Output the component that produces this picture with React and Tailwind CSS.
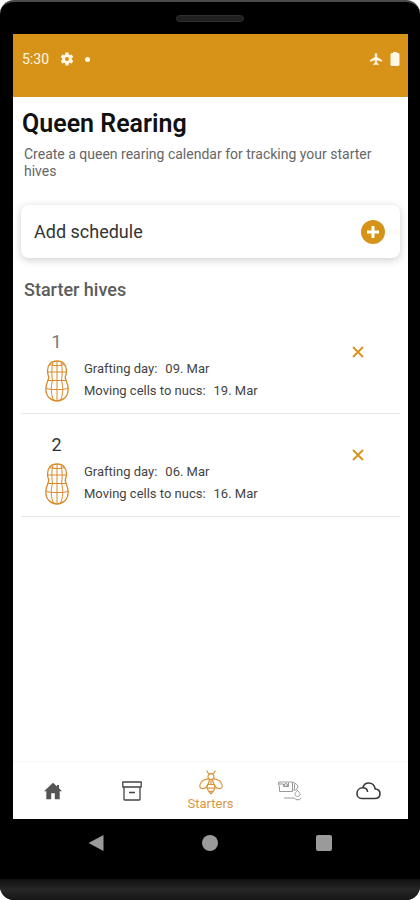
const hives = [
  { id: 1, grafting: "09. Mar", moving: "19. Mar", tone: "text-[#777777]" },
  { id: 2, grafting: "06. Mar", moving: "16. Mar", tone: "text-[#333333]" },
];

function GearIcon() {
  return (
    <svg viewBox="0 0 24 24" className="size-4" fill="currentColor" aria-hidden="true">
      <path d="M19.14 12.94a7.1 7.1 0 0 0 0-1.88l2.03-1.58a.5.5 0 0 0 .12-.61l-1.92-3.32a.49.49 0 0 0-.59-.22l-2.39.96a7 7 0 0 0-1.62-.94l-.36-2.54a.48.48 0 0 0-.48-.41h-3.84a.47.47 0 0 0-.47.41l-.36 2.54a7.4 7.4 0 0 0-1.62.94l-2.39-.96a.48.48 0 0 0-.59.22L2.74 8.87a.47.47 0 0 0 .12.61l2.03 1.58a7.4 7.4 0 0 0 0 1.88l-2.03 1.58a.5.5 0 0 0-.12.61l1.92 3.32c.12.22.37.29.59.22l2.39-.96c.5.38 1.03.7 1.62.94l.36 2.54c.05.24.24.41.48.41h3.84c.24 0 .44-.17.47-.41l.36-2.54a7 7 0 0 0 1.62-.94l2.39.96c.22.08.47 0 .59-.22l1.92-3.32a.47.47 0 0 0-.12-.61zM12 15a3 3 0 1 1 0-6 3 3 0 0 1 0 6z" />
    </svg>
  );
}

function PlaneIcon() {
  return (
    <svg viewBox="0 0 24 24" className="size-[14px]" fill="currentColor" stroke="currentColor" aria-hidden="true">
      <path d="M22 16v-2l-8.5-5V3.5a1.5 1.5 0 0 0-3 0V9L2 14v2l8.5-2.5V19L8 20.5V22l4-1 4 1v-1.5L13.5 19v-5.5z" />
    </svg>
  );
}

function BatteryIcon() {
  return (
    <svg viewBox="0 0 10 14" className="h-[14px] w-[10px]" fill="currentColor" aria-hidden="true">
      <path d="M3 0h4v1h1.5l1 1v11l-1 1h-7l-1-1V2l1-1H3z" />
    </svg>
  );
}

function CellIcon() {
  return (
    <svg viewBox="0 0 24 42" className="h-[42px] w-6" fill="none" stroke="#d98a2b" aria-hidden="true">
      <path strokeWidth="1.3" d="M12 1C6 1 2.5 5 2.5 10.500c0 2.500.5 4.500 1.300 6.500.3 2-3 6-3 12C.8 36.500 6 41 12 41s11.200-4.500 11.200-12c0-6-3.300-10-3-12 .8-2 1.300-4 1.300-6.500C21.500 5 18 1 12 1z" />
      <path strokeWidth="1" d="M12 1v40M8 2.500C6.500 7 6.500 15 7.500 20.500 5.500 27 6 35 8.500 40M16 2.500c1.500 4.500 1.500 12.500.5 18 2 6.500 1.500 14.500-1 19.500M4.500 4.500c4 1.500 11 1.500 15 0M2.500 12h19M3 20.500h18M1 28.500c6 1.500 16 1.500 22 0" />
    </svg>
  );
}

function HomeIcon() {
  return (
    <svg viewBox="0 0 18 18" className="size-[18px]" fill="#555555" aria-hidden="true">
      <path d="M9 .8 13 4.500V3h2v3.300L18 9.200h-2.300V17.200h-4.900v-6H7.200v6H2.300V9.200H0z" />
    </svg>
  );
}

function BoxIcon() {
  return (
    <svg viewBox="0 0 20 20" className="size-5" fill="none" stroke="#444444" strokeWidth="1.3" strokeLinejoin="round" aria-hidden="true">
      <path d="M.8 1h18.400v5H.8zM2 6v12.200c0 .5.300.8.800.8h14.400c.5 0 .8-.3.800-.8V6" />
      <path d="M7 11.500h6" strokeWidth="1.6" />
    </svg>
  );
}

function BeeIcon() {
  return (
    <svg viewBox="0 0 24 25" className="h-[25px] w-6" fill="none" stroke="#dc963f" strokeWidth="1.2" strokeLinecap="round" strokeLinejoin="round" aria-hidden="true">
      <path d="M8 .8c.3 1.700 1.300 2.700 2.800 3.300M16 .8c-.3 1.700-1.300 2.700-2.800 3.300" />
      <path d="M9 7c0-2 1.300-3.300 3-3.300S15 5 15 7c0 1.500-1 2.500-3 2.500S9 8.500 9 7z" />
      <path d="M10 9C6 8.500 1 11.500.8 15.500c-.1 2 1.200 3.200 3 3.200 3.200 0 5.700-4.200 6.700-8.700M14 9c4-.5 9 2.500 9.200 6.500.1 2-1.200 3.200-3 3.200-3.200 0-5.700-4.200-6.700-8.700" />
      <path d="M8.500 14.500c-1.300 2.700-.7 5.200 3.500 9.300 4.200-4.100 4.800-6.600 3.500-9.300M8.500 14.500h7M8 18.200h8M9.800 21.300h4.400M12 9.500v5" />
    </svg>
  );
}

function ExtractorIcon() {
  return (
    <svg viewBox="0 0 24 20" className="h-5 w-6" fill="none" stroke="#999999" strokeLinecap="round" strokeLinejoin="round" aria-hidden="true">
      <path d="M1 1h13.500v9.500H1.500V6L1 5zM1 3h4.500v2.500h5V2M14.500 1.500c3 .3 5.300 2 5.500 4.500l-2 3h-3.500M16.500 3.500v4" />
      <circle cx="8" cy="4" r="1.500" />
      <path d="M19.500 9.500c-1.400 1.400-2.500 2.600-2.500 3.800 0 1.300 1.100 2.200 2.500 2.200s2.500-.9 2.500-2.200c0-1.200-1.100-2.400-2.500-3.800zM6.500 17h10l1.500 1.700h3.500L23 17" />
    </svg>
  );
}

function CloudIcon() {
  return (
    <svg viewBox="0 0 25 18" className="h-[18px] w-[25px]" fill="none" stroke="#383838" strokeWidth="1.6" strokeLinecap="round" strokeLinejoin="round" aria-hidden="true">
      <path d="M5.500 16.500h13c3.200 0 5.500-1.800 5.500-4.700 0-2.800-2-4.600-4.800-4.800C18.500 3.300 16 1 12.700 1 9.800 1 7.600 2.900 6.700 5.800 3.300 5.900 1 8.300 1 11.400c0 3 2 5.100 4.500 5.100zM7 5.800c2.400 0 4 1.300 4.500 3.500" />
    </svg>
  );
}

const tabs = [
  { name: "Home", icon: HomeIcon },
  { name: "Hives", icon: BoxIcon },
  { name: "Starters", icon: BeeIcon, active: true },
  { name: "Extraction", icon: ExtractorIcon },
  { name: "Weather", icon: CloudIcon },
];

function StatusBar() {
  return (
    <header className="flex h-[63px] items-start justify-between bg-[#d69317] px-2 pt-[17px] text-[#fff6e6]">
      <div className="flex h-4 items-center gap-[10px] pl-px">
        <span className="text-sm">5:30</span>
        <GearIcon />
        <span className="size-[5px] rounded-full bg-current" />
      </div>
      <div className="flex h-4 items-center gap-[7px]">
        <PlaneIcon />
        <BatteryIcon />
      </div>
    </header>
  );
}

function HiveRow({ hive }) {
  return (
    <li className="flex h-[103px] border-b border-[#e8e8e8] pt-[19px]">
      <div className="flex w-[63px] flex-col items-center pl-2">
        <span className={"text-lg leading-6 " + hive.tone}>{hive.id}</span>
        <div className="pt-[6px]">
          <CellIcon />
        </div>
      </div>
      <dl className="flex-1 pt-7 text-[13px] leading-[22px] text-[#444444]">
        <div className="flex gap-2">
          <dt>Grafting day:</dt>
          <dd>{hive.grafting}</dd>
        </div>
        <div className="flex gap-2">
          <dt>Moving cells to nucs:</dt>
          <dd>{hive.moving}</dd>
        </div>
      </dl>
      <button type="button" aria-label={"Remove hive " + hive.id} className="mt-[14px] mr-[34px] flex size-4 items-center justify-center">
        <svg viewBox="0 0 12 12" className="size-3" stroke="#d6931f" strokeWidth="1.9" aria-hidden="true">
          <path d="M1 1l10 10M11 1 1 11" />
        </svg>
      </button>
    </li>
  );
}

export default function App() {
  return (
    <div className="min-h-screen bg-white font-[Roboto,sans-serif]">
      <div className="flex min-h-screen flex-col overflow-hidden rounded-[14px] border-t-2 border-[#4a4a4a] bg-black">
        <div className="flex h-8 items-center justify-center">
          <span className="h-[7px] w-[68px] rounded-full border border-[#303030] bg-[#202020]" />
        </div>

        <div className="mr-3 ml-[13px] flex flex-1 flex-col bg-white">
          <StatusBar />

          <main className="flex-1 px-2">
            <h1 className="pt-[11px] pl-px text-[25px] leading-8 font-semibold text-[#111111]">Queen Rearing</h1>
            <p className="pt-[6px] pr-2 pl-[3px] text-sm leading-[17px] text-[#666666]">
              Create a queen rearing calendar for tracking your starter hives
            </p>

            <button
              type="button"
              className="mt-[25px] flex h-[53px] w-full items-center justify-between rounded-lg bg-white pr-[15px] pl-[13px] text-lg text-[#333333] shadow-[0_2px_8px_rgba(0,0,0,0.2)]"
            >
              Add schedule
              <svg viewBox="0 0 24 24" className="size-6" aria-hidden="true">
                <circle cx="12" cy="12" r="12" fill="#d6931a" />
                <path d="M12 6v12M6 12h12" stroke="#fff" strokeWidth="3" />
              </svg>
            </button>

            <h2 className="pt-5 pl-[3px] text-lg leading-6 font-medium text-[#5c5c5c]">Starter hives</h2>
            <ul className="pt-[9px]">
              {hives.map((hive) => (
                <HiveRow key={hive.id} hive={hive} />
              ))}
            </ul>
          </main>

          <nav className="grid h-[58px] grid-cols-5 border-t border-[#f8f8f8]">
            {tabs.map((tab) => (
              <button
                key={tab.name}
                type="button"
                aria-label={tab.name}
                className="flex flex-col items-center justify-center"
              >
                <tab.icon />
                {tab.active && <span className="pt-px text-[13px] leading-4 text-[#dc963f]">{tab.name}</span>}
              </button>
            ))}
          </nav>
        </div>

        <div className="flex h-12 items-center justify-between px-[88px] text-[#9a9a9a]">
          <button type="button" aria-label="Back">
            <svg viewBox="0 0 16 18" className="h-[18px] w-4" fill="currentColor" aria-hidden="true">
              <path d="M15.5 1v16L.5 9z" />
            </svg>
          </button>
          <button type="button" aria-label="Home screen" className="size-4 rounded-full bg-current" />
          <button type="button" aria-label="Recent apps" className="size-4 rounded-xs bg-current" />
        </div>
        <div className="mt-3 h-[21px] bg-linear-to-b from-[#111111] via-[#262626] to-[#161616]" />
      </div>
    </div>
  );
}
